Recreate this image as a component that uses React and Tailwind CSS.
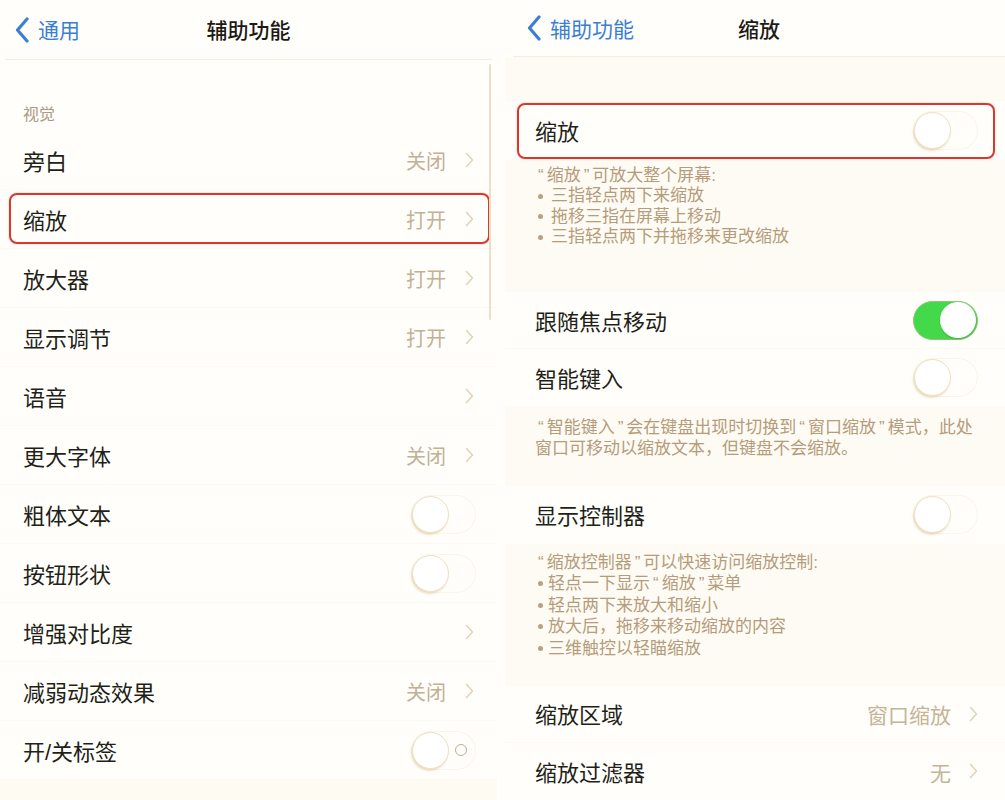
import React from 'react';

const Chevron = () => (
  <svg width="9" height="16" viewBox="0 0 9 16" className="shrink-0">
    <path d="M1.5 1.5 L7.5 8 L1.5 14.5" fill="none" stroke="#e2d3b8" strokeWidth="1.6" strokeLinecap="round" strokeLinejoin="round" />
  </svg>
);

const BackChevron = () => (
  <svg width="14" height="26" viewBox="0 0 14 26" className="shrink-0">
    <path d="M12 2 L2.5 13 L12 24" fill="none" stroke="#3b7fd3" strokeWidth="3.2" strokeLinecap="round" strokeLinejoin="round" />
  </svg>
);

const Toggle = ({ on, label }) => {
  if (on) {
    return (
      <div className="w-[65px] h-[39px] rounded-full bg-[#43d94b] border border-[#8ac774] flex items-center justify-end pr-[1px] shrink-0">
        <div className="w-[36px] h-[36px] rounded-full bg-white shadow-[0_1px_2px_rgba(60,120,40,0.4)]" />
      </div>
    );
  }
  return (
    <div className="relative w-[65px] h-[39px] rounded-full bg-[#fffefa] shadow-[inset_0_0_0_1px_#fbf5e8] flex items-center pl-[1px] shrink-0">
      <div className="w-[37px] h-[37px] rounded-full bg-white border border-[#eedfc2] shadow-[-1px_2px_2px_rgba(205,165,105,0.35)]" />
      {label && <div className="absolute right-[9px] w-[12px] h-[12px] rounded-full border-[1.5px] border-[#b9ad9b]" />}
    </div>
  );
};

const RedBox = ({ className }) => (
  <div className={`absolute rounded-[8px] border-2 border-[#d8382d] shadow-[0_0_2px_rgba(216,56,45,0.35)] pointer-events-none ${className}`} />
);

// quotes drawn a little wider, as in the screenshot
const Q = ({ c }) => <span className="px-[3px]">{c}</span>;

const leftRows = [
  { t: '旁白', v: '关闭', chev: true },
  { t: '缩放', v: '打开', chev: true, box: true },
  { t: '放大器', v: '打开', chev: true },
  { t: '显示调节', v: '打开', chev: true },
  { t: '语音', chev: true },
  { t: '更大字体', v: '关闭', chev: true },
  { t: '粗体文本', toggle: true },
  { t: '按钮形状', toggle: true },
  { t: '增强对比度', chev: true },
  { t: '减弱动态效果', v: '关闭', chev: true },
  { t: '开/关标签', toggle: true, label: true },
];

const LeftPanel = () => (
  <div className="relative w-[497px] shrink-0 flex flex-col">
    <div className="h-[60px] mx-[5px] border-b border-[#f5ecdb] grid grid-cols-[1fr_auto_1fr] items-center">
      <div className="flex items-center gap-[9px] pl-[10px]">
        <BackChevron />
        <span className="text-[21px] text-[#3b7fd3] pt-[3px]">通用</span>
      </div>
      <div className="text-[21px] font-medium text-[#1d1a15] pt-[3px]">辅助功能</div>
      <div />
    </div>
    <div className="h-[71px] pl-[23px] pt-[43px] text-[16px] text-[#ab9b83]">视觉</div>
    {leftRows.map((r) => (
      <div key={r.t} className="relative h-[59px] flex items-center pl-[23px] pr-[21px] border-b border-[#fdf9f1]">
        <span className="flex-1 text-[22px] text-[#221e18] pt-[4px]">{r.t}</span>
        {r.v && <span className="text-[20px] text-[#c2b195] mr-[19px] pt-[4px]">{r.v}</span>}
        {r.chev && <span className="mr-[2px]"><Chevron /></span>}
        {r.toggle && <Toggle label={r.label} />}
        {r.box && <RedBox className="left-[9px] right-[7px] top-[3px] bottom-[4px]" />}
      </div>
    ))}
    <div className="flex-1 bg-[#fefbf3]" />
    <div className="absolute left-[489px] top-[64px] w-[2px] h-[256px] bg-[#ecdfc8] rounded-full" />
  </div>
);

const Row = ({ title, children, box, className = '' }) => (
  <div className={`relative h-[58px] flex items-center pl-[30px] pr-[27px] bg-[#fffefb] ${className}`}>
    <span className="flex-1 text-[22px] text-[#221e18] pt-[4px]">{title}</span>
    {children}
    {box && <RedBox className="left-[12px] right-[10px] top-[2px] bottom-[1px]" />}
  </div>
);

const Foot = ({ className = '', children }) => (
  <div className={`bg-[#fefbf4] pl-[30px] pr-[20px] text-[17px] text-[#b59c7b] ${className}`}>{children}</div>
);

const Bullet = ({ children, gap = 'gap-[9px]' }) => (
  <div className={`flex items-center ${gap}`}>
    <span className="w-[5px] h-[5px] rounded-full bg-[#b9a283] ml-[3px] shrink-0" />
    <span>{children}</span>
  </div>
);

const RightPanel = () => (
  <div className="w-[500px] shrink-0 flex flex-col">
    <div className="h-[58px] ml-[8px] border-b border-[#f5ecdb] grid grid-cols-[1fr_auto_1fr] items-center">
      <div className="flex items-center gap-[9px] pl-[14px]">
        <BackChevron />
        <span className="text-[21px] text-[#3b7fd3] pt-[3px]">辅助功能</span>
      </div>
      <div className="text-[21px] font-medium text-[#1d1a15] pt-[3px]">缩放</div>
      <div />
    </div>
    <div className="h-[44px] bg-[#fefbf4]" />
    <Row title="缩放" box className="h-[60px]"><Toggle /></Row>
    <Foot className="h-[134px] pt-[6px] leading-[20.5px]">
      <div><Q c="“" />缩放<Q c="”" />可放大整个屏幕:</div>
      <Bullet gap="gap-[8px]">三指轻点两下来缩放</Bullet>
      <Bullet gap="gap-[8px]">拖移三指在屏幕上移动</Bullet>
      <Bullet gap="gap-[8px]">三指轻点两下并拖移来更改缩放</Bullet>
    </Foot>
    <Row title="跟随焦点移动" className="border-b border-[#fdf9f1]"><Toggle on /></Row>
    <Row title="智能键入"><Toggle /></Row>
    <Foot className="h-[81px] pt-[11px] leading-[21px]">
      <div className="whitespace-nowrap"><Q c="“" />智能键入<Q c="”" />会在键盘出现时切换到<Q c="“" />窗口缩放<Q c="”" />模式，此处</div>
      <div>窗口可移动以缩放文本，但键盘不会缩放。</div>
    </Foot>
    <Row title="显示控制器"><Toggle /></Row>
    <Foot className="h-[144px] pt-[8px] leading-[21.5px]">
      <div><Q c="“" />缩放控制器<Q c="”" />可以快速访问缩放控制:</div>
      <Bullet gap="gap-[5px]">轻点一下显示<Q c="“" />缩放<Q c="”" />菜单</Bullet>
      <Bullet gap="gap-[5px]">轻点两下来放大和缩小</Bullet>
      <Bullet gap="gap-[5px]">放大后，拖移来移动缩放的内容</Bullet>
      <Bullet gap="gap-[5px]">三维触控以轻瞄缩放</Bullet>
    </Foot>
    <Row title="缩放区域" className="border-b border-[#fdf9f1]">
      <span className="text-[21px] text-[#c6b497] mr-[18px] pt-[4px]">窗口缩放</span>
      <Chevron />
    </Row>
    <Row title="缩放过滤器">
      <span className="text-[21px] text-[#c6b497] mr-[18px] pt-[4px]">无</span>
      <Chevron />
    </Row>
  </div>
);

export default function App() {
  return (
    <div className="w-[1005px] h-[800px] overflow-hidden flex gap-[8px] bg-[#fffefb] font-['Liberation_Sans','Noto_Sans_CJK_SC',sans-serif]">
      <LeftPanel />
      <RightPanel />
    </div>
  );
}
